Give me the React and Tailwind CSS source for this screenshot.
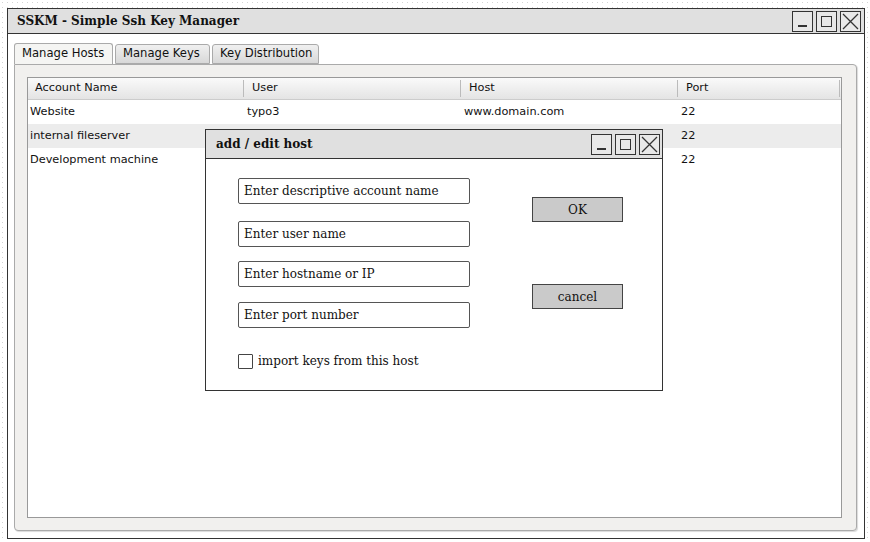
import React from "react";

function WinButtons() {
  return (
    <div className="flex gap-[3px]">
      <div className="w-[21px] h-[21px] border border-[#333] bg-[#e8e8e8] flex items-end justify-center pb-[4px]">
        <div className="w-[9px] h-[1.5px] bg-[#333]" />
      </div>
      <div className="w-[21px] h-[21px] border border-[#333] bg-[#e8e8e8] flex items-center justify-center">
        <div className="w-[11px] h-[11px] border-[1.5px] border-[#333]" />
      </div>
      <div className="w-[21px] h-[21px] border border-[#333] bg-[#e8e8e8] flex items-center justify-center">
        <svg width="17" height="17" viewBox="0 0 17 17">
          <path d="M1 1 L16 16 M16 1 L1 16" stroke="#333" strokeWidth="1.3" fill="none" />
        </svg>
      </div>
    </div>
  );
}

const rows = [
  ["Website", "typo3", "www.domain.com", "22"],
  ["internal fileserver", "", "", "22"],
  ["Development machine", "", "", "22"],
];

function Input({ text }) {
  return (
    <div className="w-[232px] h-[26px] border-[1.5px] border-[#555] rounded-[2px] bg-white flex items-center px-[5px] text-[12px] text-[#111]">
      {text}
    </div>
  );
}

export default function App() {
  return (
    <div
      className="relative w-[870px] h-[542px] pt-[8px] pl-[7px] bg-white bg-[radial-gradient(circle,#d4d4d4_0.8px,transparent_1px)] bg-[length:5px_5px]"
      style={{ fontFamily: '"DejaVu Sans", sans-serif' }}
    >
      <div className="w-[858px] h-[531px] border-[1.5px] border-[#333] bg-white flex flex-col">
        <div className="h-[25px] bg-[#e0e0e0] border-b-[1.5px] border-[#333] flex items-center justify-between pl-[9px] pr-[3px]">
          <span className="text-[12px] font-bold text-[#111]" style={{ fontFamily: '"DejaVu Serif", serif' }}>
            SSKM - Simple Ssh Key Manager
          </span>
          <WinButtons />
        </div>
        <div className="pl-[6px] pt-[9px] flex flex-col">
          <div className="flex gap-[2px] h-[21px] items-end text-[11.6px] text-[#111]">
            <div className="w-[99px] h-[21px] pl-[7px] flex items-center border border-b-0 border-[#aaa] rounded-t-[3px] bg-[#f5f5f3]">Manage Hosts</div>
            <div className="w-[95px] h-[20px] pl-[7px] flex items-center border border-[#aaa] rounded-t-[3px] bg-gradient-to-b from-[#f0f0f0] to-[#d8d8d8]">Manage Keys</div>
            <div className="w-[107px] h-[20px] pl-[7px] flex items-center border border-[#aaa] rounded-t-[3px] bg-gradient-to-b from-[#f0f0f0] to-[#d8d8d8]">Key Distribution</div>
          </div>
          <div className="w-[843px] h-[467px] border border-[#aaa] rounded-b-[4px] rounded-tr-[4px] bg-[#f1f0ee] pl-[12px] pt-[12px] shadow-[1px_1px_1px_rgba(0,0,0,0.15)]">
            <div className="w-[815px] h-[441px] border border-[#999] bg-white text-[11.3px] text-[#111]">
              <div className="h-[22px] flex bg-gradient-to-b from-[#fafafa] to-[#e4e4e4] border-b border-[#ccc]">
                <div className="w-[216px] pl-[7px] flex items-center border-r border-[#bbb] my-[2px]">Account Name</div>
                <div className="w-[217px] pl-[8px] flex items-center border-r border-[#bbb] my-[2px]">User</div>
                <div className="w-[217px] pl-[8px] flex items-center border-r border-[#bbb] my-[2px]">Host</div>
                <div className="w-[162px] pl-[8px] flex items-center border-r border-[#bbb] my-[2px]">Port</div>
              </div>
              {rows.map((r, i) => (
                <div key={i} className={"h-[24px] flex items-center " + (i === 1 ? "bg-[#ececec]" : "bg-white")}>
                  <div className="w-[217px] pl-[2px]">{r[0]}</div>
                  <div className="w-[217px] pl-[2px]">{r[1]}</div>
                  <div className="w-[217px] pl-[2px]">{r[2]}</div>
                  <div className="pl-[2px]">{r[3]}</div>
                </div>
              ))}
            </div>
          </div>
        </div>
      </div>

      <div
        className="absolute left-[205px] top-[129px] w-[458px] h-[262px] border-[1.5px] border-[#333] bg-white flex flex-col"
        style={{ fontFamily: '"DejaVu Serif", serif' }}
      >
        <div className="h-[29px] bg-[#e0e0e0] border-b-[1.5px] border-[#333] flex items-center justify-between pl-[10px] pr-[2px]">
          <span className="text-[12px] font-bold text-[#111]">add / edit host</span>
          <WinButtons />
        </div>
        <div className="flex pl-[32px] pt-[19px]">
          <div className="flex flex-col">
            <Input text="Enter descriptive account name" />
            <div className="h-[17px]" />
            <Input text="Enter user name" />
            <div className="h-[14px]" />
            <Input text="Enter hostname or IP" />
            <div className="h-[15px]" />
            <Input text="Enter port number" />
            <div className="flex items-center gap-[5px] mt-[24px] text-[12px] text-[#111]">
              <div className="w-[15px] h-[15px] border-[1.5px] border-[#444] rounded-[1px] bg-white" />
              <span>import keys from this host</span>
            </div>
          </div>
          <div className="flex flex-col ml-[62px] pt-[19px]">
            <div className="w-[91px] h-[25px] border-[1.5px] border-[#444] bg-[#cacaca] flex items-center justify-center text-[12px] text-[#111]">OK</div>
            <div className="w-[91px] h-[25px] mt-[62px] border-[1.5px] border-[#444] bg-[#cacaca] flex items-center justify-center text-[12px] text-[#111]">cancel</div>
          </div>
        </div>
      </div>
    </div>
  );
}
